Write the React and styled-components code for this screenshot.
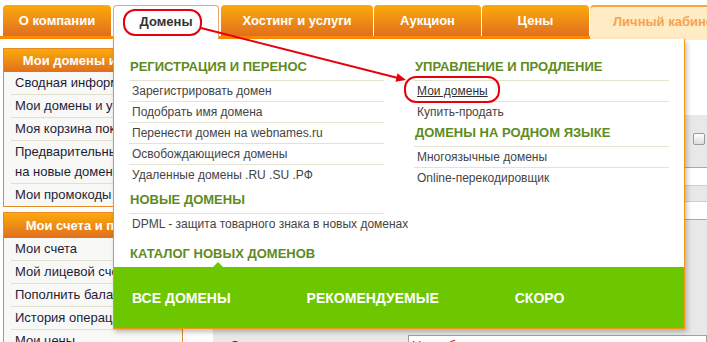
import React from 'react';
import styled, { createGlobalStyle, css } from 'styled-components';

const GlobalStyle = createGlobalStyle`
  html, body { margin: 0; padding: 0; background: #fff; overflow: hidden; }
  body { font-family: "Liberation Sans", Arial, sans-serif; }
  * { box-sizing: border-box; }
`;

const Page = styled.div`
  position: relative;
  width: 707px;
  height: 342px;
  overflow: hidden;
`;

const Nav = styled.nav`
  display: flex;
  align-items: flex-start;
  height: 39px;
  padding: 5px 0 0 3px;
  border-bottom: 3px solid #ff8a00;
`;

const Tab = styled.div`
  flex: 0 0 ${p => p.$w}px;
  height: 31px;
  margin-right: ${p => (p.$gap ?? 1)}px;
  border-radius: 4px 4px 0 0;
  background: linear-gradient(#fcaa0b, #e06f1f);
  color: #fff;
  font-size: 13px;
  font-weight: bold;
  display: flex;
  align-items: center;
  justify-content: center;
  white-space: nowrap;
  ${p => p.$active && css`
    position: relative;
    height: 34px;
    margin-bottom: -3px;
    padding-bottom: 3px;
    background: #fff;
    color: #333;
    border: 1px solid #e6a870;
    border-bottom: none;
  `}
  ${p => p.$light && css`
    height: 35px;
    margin-bottom: -4px;
    padding: 0 0 5px 23px;
    justify-content: flex-start;
    background: #ffecc4;
    color: #f7a24e;
    border-top: 2px solid #f6a545;
  `}
`;

const Body = styled.div`
  display: flex;
  align-items: flex-start;
`;

const Sidebar = styled.aside`
  flex: 0 0 180px;
  margin: 9px 0 0 3px;
  display: flex;
  flex-direction: column;
  gap: 5px;
`;

const SideBox = styled.div`
  border: 1px solid #e8892a;
  background: #f8f8f6;
`;

const SideHead = styled.div`
  height: ${p => p.$h}px;
  background: linear-gradient(#fcaa0b, #e06f1f);
  color: #fff;
  font-size: 13px;
  font-weight: bold;
  display: flex;
  align-items: center;
  justify-content: center;
  white-space: nowrap;
  overflow: hidden;
`;

const SideItem = styled.a`
  display: block;
  margin-left: 7px;
  padding: 1px 0 1px 4px;
  font-size: 13px;
  line-height: 20px;
  color: #1d1d38;
  text-decoration: none;
  border-bottom: 1px solid #e2dfcf;
  &:last-child { border-bottom: none; }
`;

const Main = styled.main`
  flex: 1;
  margin: 76px 0 0 30px;
  display: flex;
  flex-direction: column;
  background: #e8e8e8;
`;

const PanelHead = styled.div`
  height: 53px;
  display: flex;
  align-items: center;
  justify-content: flex-end;
  padding: 0 2px 5px 0;
  border-bottom: 1px solid #aaa;
`;

const Check = styled.span`
  width: 12px;
  height: 12px;
  border: 1px solid #999;
  border-radius: 2px;
  background: linear-gradient(#fff, #ddd);
`;

const PanelRow = styled.div`
  height: ${p => p.$h}px;
  background: ${p => (p.$white ? '#fff' : '#e8e8e8')};
  border-bottom: 1px solid ${p => (p.$dark ? '#aaa' : '#cfcfcf')};
`;

const FormRow = styled.div`
  display: flex;
  align-items: flex-start;
  margin-top: 115px;
  padding-left: 17px;
`;

const Label = styled.label`
  flex: 0 0 178px;
  font-size: 13px;
  line-height: 16px;
  padding-top: 3px;
  color: #333;
`;

const Input = styled.div`
  flex: 1;
  height: 22px;
  background: #fff;
  border: 1px solid #a0a0a0;
  padding: 2px 3px;
  font-size: 13px;
  color: #c00;
`;

const Dropdown = styled.div`
  position: absolute;
  top: 39px;
  left: 113px;
  width: 572px;
  background: #fff;
  border: 1px solid #f5960f;
  border-top: none;
  box-shadow: 2px 3px 5px rgba(0, 0, 0, 0.25);
  z-index: 5;
`;

const Columns = styled.div`
  display: grid;
  grid-template-columns: 255px 255px;
  column-gap: 30px;
  padding: 17px 15px 0;
  align-items: start;
`;

const Column = styled.div`
  display: flex;
  flex-direction: column;
`;

const Heading = styled.div`
  font-size: 13px;
  font-weight: bold;
  line-height: 16px;
  color: #5e8b22;
  text-transform: uppercase;
  white-space: nowrap;
  padding: 3px 0 5px 1px;
  margin-top: ${p => p.$mt || 0}px;
  border-bottom: ${p => (p.$plain ? 'none' : '1px solid #e5e2d2')};
`;

const List = styled.div`
  display: flex;
  flex-direction: column;
`;

const Item = styled.a`
  display: block;
  font-size: 12px;
  line-height: 20px;
  padding-left: 3px;
  color: #444;
  white-space: nowrap;
  text-decoration: none;
  border-bottom: 1px solid #e5e2d2;
  &:last-child { border-bottom: none; }
  ${p => p.$u && css`
    color: #333;
    text-decoration: underline;
  `}
`;

const GreenBar = styled.div`
  position: relative;
  height: 61px;
  background: #6cc600;
  display: flex;
  align-items: center;
  gap: 76px;
  padding-left: 18px;
  &::before {
    content: '';
    position: absolute;
    left: 99px;
    top: -5px;
    border-left: 5px solid transparent;
    border-right: 5px solid transparent;
    border-bottom: 5px solid #6cc600;
  }
`;

const GreenLink = styled.a`
  color: #fff;
  font-size: 14px;
  font-weight: bold;
  text-transform: uppercase;
  white-space: nowrap;
`;

const Annot = styled.svg`
  position: absolute;
  left: 0;
  top: 0;
  width: 707px;
  height: 342px;
  pointer-events: none;
  z-index: 10;
`;

const tabs = [
  { label: 'О компании', w: 108, gap: 2 },
  { label: 'Домены', w: 106, gap: 2, active: true },
  { label: 'Хостинг и услуги', w: 152, gap: 1 },
  { label: 'Аукцион', w: 107, gap: 1 },
  { label: 'Цены', w: 107, gap: 1 },
  { label: 'Личный кабинет', w: 150, gap: 0, light: true },
];

export default function App() {
  return (
    <Page>
      <GlobalStyle />
      <Nav>
        {tabs.map(t => (
          <Tab key={t.label} $w={t.w} $gap={t.gap} $active={t.active} $light={t.light}>
            {t.label}
          </Tab>
        ))}
      </Nav>
      <Body>
        <Sidebar>
          <SideBox>
            <SideHead $h={23}>Мои домены и услуги</SideHead>
            <SideItem>Сводная информация</SideItem>
            <SideItem>Мои домены и услуги</SideItem>
            <SideItem>Моя корзина покупок</SideItem>
            <SideItem>Предварительные заявки на новые домены</SideItem>
            <SideItem>Мои промокоды</SideItem>
          </SideBox>
          <SideBox>
            <SideHead $h={25}>Мои счета и платежи</SideHead>
            <SideItem>Мои счета</SideItem>
            <SideItem>Мой лицевой счет</SideItem>
            <SideItem>Пополнить баланс</SideItem>
            <SideItem>История операций</SideItem>
            <SideItem>Мои цены</SideItem>
          </SideBox>
        </Sidebar>
        <Main>
          <PanelHead>
            <Check />
          </PanelHead>
          <PanelRow $white $h={18} />
          <PanelRow $h={16} />
          <PanelRow $white $dark $h={18} />
          <FormRow>
            <Label>Срок регистрации:</Label>
            <Input>Не выбрано</Input>
          </FormRow>
        </Main>
      </Body>

      <Dropdown>
        <Columns>
          <Column>
            <Heading>Регистрация и перенос</Heading>
            <List>
              <Item>Зарегистрировать домен</Item>
              <Item>Подобрать имя домена</Item>
              <Item>Перенести домен на webnames.ru</Item>
              <Item>Освобождающиеся домены</Item>
              <Item>Удаленные домены .RU .SU .РФ</Item>
            </List>
            <Heading $mt={4}>Новые домены</Heading>
            <List>
              <Item>DPML - защита товарного знака в новых доменах</Item>
            </List>
            <Heading $mt={9} $plain>Каталог новых доменов</Heading>
          </Column>
          <Column>
            <Heading>Управление и продление</Heading>
            <List>
              <Item $u>Мои домены</Item>
              <Item>Купить-продать</Item>
            </List>
            <Heading>Домены на родном языке</Heading>
            <List>
              <Item>Многоязычные домены</Item>
              <Item>Online-перекодировщик</Item>
            </List>
          </Column>
        </Columns>
        <GreenBar>
          <GreenLink>Все домены</GreenLink>
          <GreenLink>Рекомендуемые</GreenLink>
          <GreenLink>Скоро</GreenLink>
        </GreenBar>
      </Dropdown>

      <Annot viewBox="0 0 707 342">
        <rect x="124" y="10" width="77" height="25" rx="11" fill="none" stroke="#e8000c" strokeWidth="2" />
        <rect x="405" y="77" width="94" height="25" rx="11" fill="none" stroke="#e8000c" strokeWidth="2" />
        <line x1="201" y1="28" x2="398" y2="78" stroke="#e8000c" strokeWidth="2" />
        <polygon points="406,80 395.5,81.8 397.5,73.2" fill="#e8000c" />
      </Annot>
    </Page>
  );
}
